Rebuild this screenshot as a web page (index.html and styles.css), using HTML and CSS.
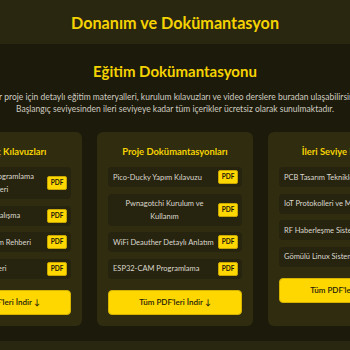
FILE: index.html
```html
<!DOCTYPE html>
<html lang="tr">
<head>
    <meta charset="UTF-8">
    <meta name="viewport" content="width=device-width, initial-scale=1.0">
    <title>Donanım ve Dokümantasyon</title>
    <link rel="stylesheet" href="styles.css">
</head>
<body>

<header class="top-bar">
    <h1>Donanım ve Dokümantasyon</h1>
</header>

<section class="docs">
    <h2>Eğitim Dokümantasyonu</h2>
    <div class="lead-wrap">
        <p class="lead">Her proje için detaylı eğitim materyalleri, kurulum kılavuzları ve video derslere buradan ulaşabilirsiniz.<br>Başlangıç seviyesinden ileri seviyeye kadar tüm içerikler ücretsiz olarak sunulmaktadır.</p>
    </div>

    <div class="cards-wrap">
        <div class="cards">
            <div class="doc-card">
                <h3>Başlangıç Kılavuzları</h3>
                <ul class="doc-list">
                    <li><span>Arduino ile Programlama Temelleri</span><a class="pdf" href="#">PDF</a></li>
                    <li><span>Raspberry Pi ile Çalışma</span><a class="pdf" href="#">PDF</a></li>
                    <li><span>Kali Linux Kurulum Rehberi</span><a class="pdf" href="#">PDF</a></li>
                    <li><span>Elektronik Temelleri</span><a class="pdf" href="#">PDF</a></li>
                </ul>
                <button class="dl-all">Tüm PDF'leri İndir ↓</button>
            </div>
            <div class="doc-card">
                <h3>Proje Dokümantasyonları</h3>
                <ul class="doc-list">
                    <li><span>Pico-Ducky Yapım Kılavuzu</span><a class="pdf" href="#">PDF</a></li>
                    <li><span>Pwnagotchi Kurulum ve Kullanım</span><a class="pdf" href="#">PDF</a></li>
                    <li><span>WiFi Deauther Detaylı Anlatım</span><a class="pdf" href="#">PDF</a></li>
                    <li><span>ESP32-CAM Programlama</span><a class="pdf" href="#">PDF</a></li>
                </ul>
                <button class="dl-all">Tüm PDF'leri İndir ↓</button>
            </div>
            <div class="doc-card">
                <h3>İleri Seviye Kılavuzlar</h3>
                <ul class="doc-list">
                    <li><span>PCB Tasarım Teknikleri</span><a class="pdf" href="#">PDF</a></li>
                    <li><span>IoT Protokolleri ve MQTT</span><a class="pdf" href="#">PDF</a></li>
                    <li><span>RF Haberleşme Sistemleri</span><a class="pdf" href="#">PDF</a></li>
                    <li><span>Gömülü Linux Sistemleri</span><a class="pdf" href="#">PDF</a></li>
                </ul>
                <button class="dl-all">Tüm PDF'leri İndir ↓</button>
            </div>
        </div>
    </div>
</section>

<section class="next-section"></section>

</body>
</html>
```

FILE: styles.css
```css
body {
    margin: 0;
    font-family: 'Lato', 'Noto Sans', sans-serif;
    background-color: #1c1a0b;
    color: #d6d3c8;
    overflow: hidden;
}
.top-bar {
    background-color: #2a2711;
    height: 44px;
    display: flex;
    justify-content: center;
    align-items: center;
}
.top-bar h1 {
    margin: 0;
    font-size: 16.2px;
    font-weight: bold;
    color: #f5d300;
}
.docs {
    padding: 17px 0 15px;
    text-align: center;
}
.docs h2 {
    margin: 0 0 10px;
    font-size: 15px;
    line-height: 20px;
    color: #f5d300;
}
.lead-wrap {
    display: flex;
    justify-content: center;
}
.lead {
    flex: 0 0 420px;
    margin: 0 0 17px;
    font-size: 8.5px;
    line-height: 12px;
    color: #cfccc0;
}
.cards-wrap {
    display: flex;
    justify-content: center;
}
.cards {
    flex: 0 0 498px;
    display: grid;
    grid-template-columns: repeat(3, 1fr);
    gap: 15px;
}
.doc-card {
    background-color: #302c10;
    border-radius: 6px;
    padding: 11px;
    display: flex;
    flex-direction: column;
}
.doc-card h3 {
    margin: 0 0 7px;
    font-size: 9.4px;
    line-height: 17px;
    color: #f5d300;
}
.doc-list {
    list-style: none;
    margin: 0 0 11px;
    padding: 0;
    display: flex;
    flex-direction: column;
    gap: 6.5px;
}
.doc-list li {
    box-sizing: border-box;
    min-height: 20px;
    background-color: #26230e;
    border-radius: 4px;
    padding: 3px 4px 3px 5px;
    display: flex;
    justify-content: space-between;
    align-items: center;
    gap: 2px;
    font-size: 7.5px;
    line-height: 13px;
    color: #dcd9cf;
}
.pdf {
    flex: 0 0 auto;
    box-sizing: border-box;
    width: 20px;
    background-color: #ffd700;
    border: 1px solid #c7a600;
    border-radius: 2px;
    color: #1c1a0b;
    font-size: 6.5px;
    font-weight: bold;
    line-height: 12px;
    text-align: center;
    text-decoration: none;
}
.dl-all {
    width: 100%;
    height: 25px;
    border: 1px solid #d4b300;
    border-radius: 4px;
    background-color: #ffd700;
    color: #1c1a0b;
    font-family: inherit;
    font-size: 8px;
    font-weight: 600;
    cursor: pointer;
}
.next-section {
    background-color: #2a2711;
    height: 60px;
}
```
